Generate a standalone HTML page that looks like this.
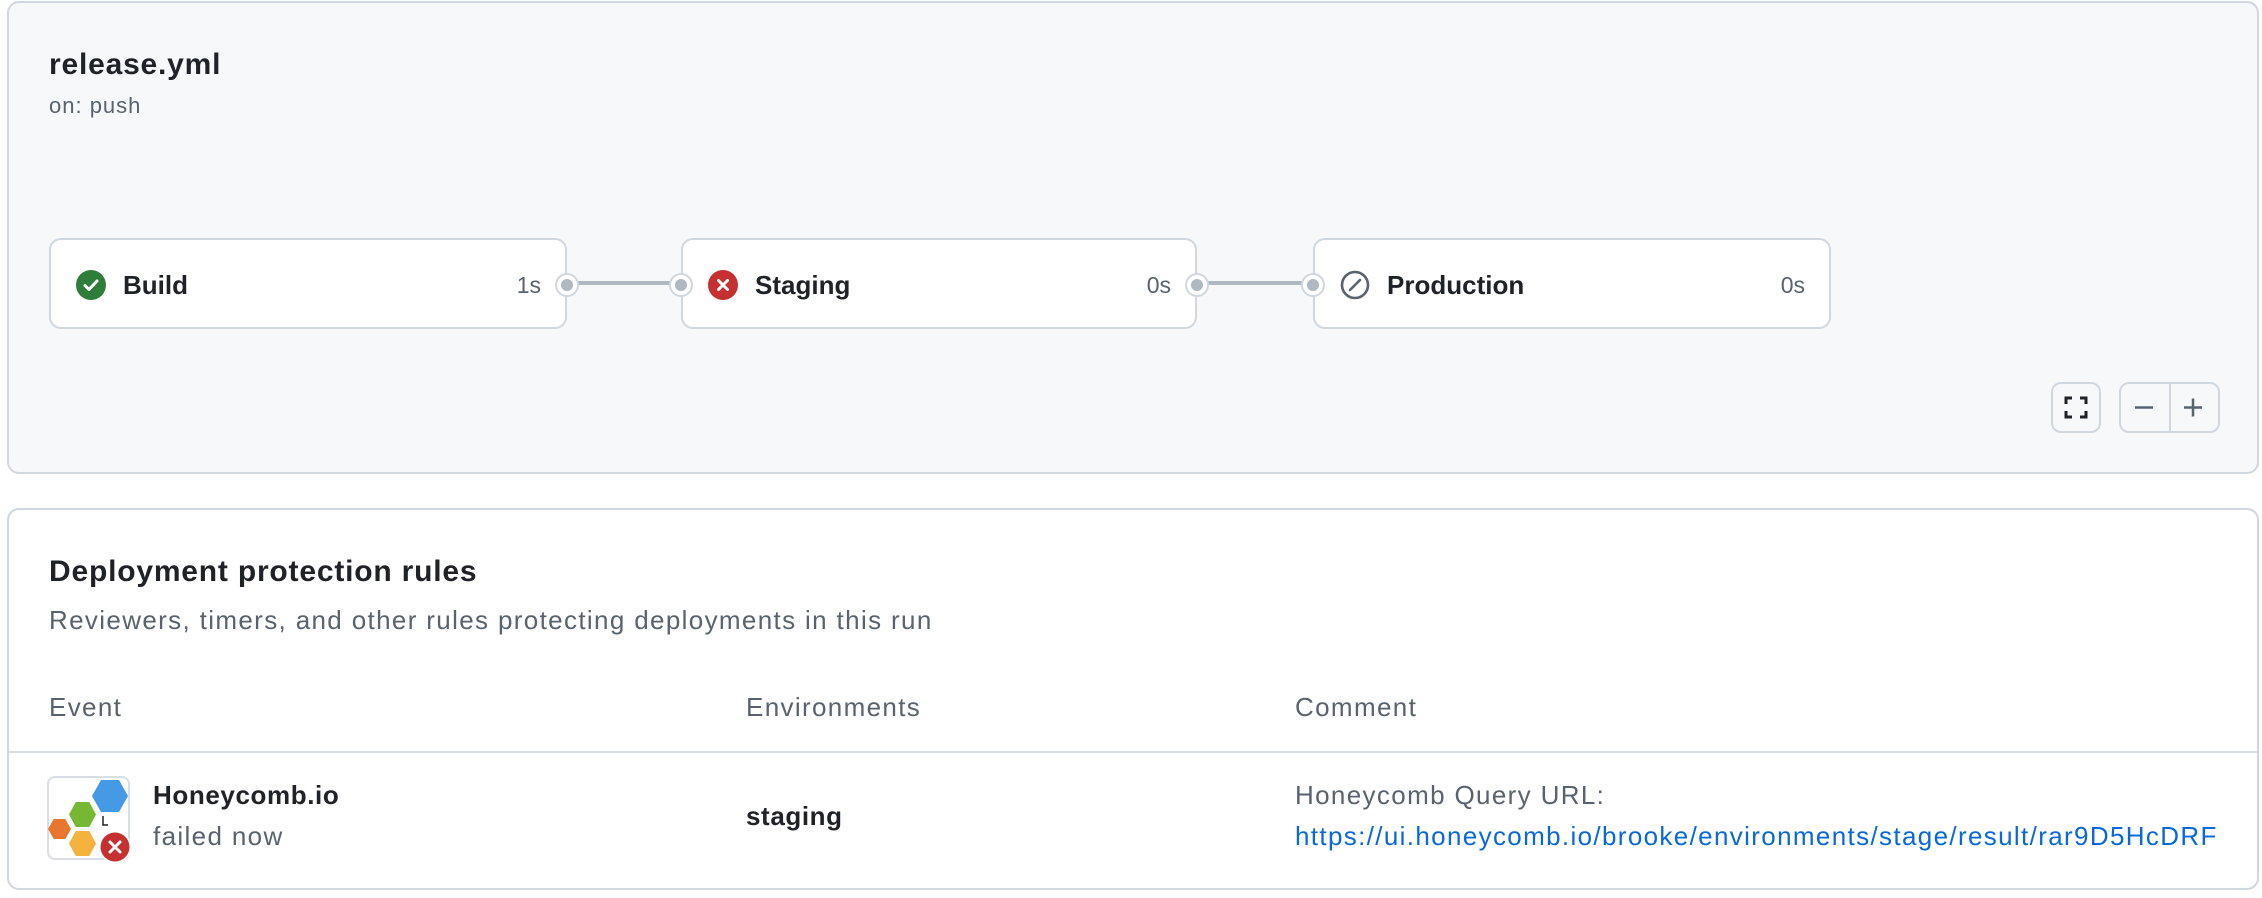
<!DOCTYPE html>
<html><head><meta charset="utf-8"><style>
*{box-sizing:border-box;margin:0;padding:0}
body{width:2262px;height:898px;background:#fff;font-family:"Liberation Sans",sans-serif;color:#1f2328;position:relative;overflow:hidden}
.a{position:absolute;white-space:nowrap}
.p1{left:7px;top:1px;width:2252px;height:473px;background:#f6f8fa;border:2px solid #d0d7de;border-radius:12px}
.p2{left:7px;top:508px;width:2252px;height:382px;background:#fff;border:2px solid #d0d7de;border-radius:12px}
.node{position:absolute;top:238px;height:91px;background:#fff;border:2px solid #d0d7de;border-radius:12px}
.lbl{position:absolute;left:72px;top:30px;font-size:26px;font-weight:600;color:#1f2328}
.dur{position:absolute;right:24px;top:32px;font-size:23px;color:#59636e}
.dot{position:absolute;width:20px;height:20px;border-radius:50%;background:#afb8c1;border:4px solid #fff;box-shadow:0 0 0 2px #d0d7de;top:35px}
.ic{position:absolute;left:25px;top:30px}
.line{position:absolute;top:281px;height:4px;background:#afb8c1}
.btn{position:absolute;background:#f6f8fa;border:2px solid #d0d7de;border-radius:10px}
.g{color:#59636e}
.t{font-size:26px;letter-spacing:1.35px}
.b{font-size:26px;font-weight:700;letter-spacing:0.6px}
</style></head><body>
<div class="a p1"></div>
<div class="a" style="left:49px;top:48px;font-size:30px;font-weight:700;letter-spacing:0.8px">release.yml</div>
<div class="a g" style="left:49px;top:93px;font-size:22px;letter-spacing:1px">on: push</div>

<div class="line" style="left:575px;width:100px"></div>
<div class="line" style="left:1205px;width:110px"></div>

<div class="node" style="left:49px;width:518px">
<svg class="ic" width="30" height="30" viewBox="0 0 30 30"><circle cx="15" cy="15" r="15" fill="#2f7d3b"/><path d="M9 15.5l4 4 8-8.5" stroke="#fff" stroke-width="3" fill="none" stroke-linecap="round" stroke-linejoin="round"/></svg>
<div class="lbl">Build</div><div class="dur">1s</div>
<div class="dot" style="right:-12px"></div>
</div>
<div class="node" style="left:681px;width:516px">
<svg class="ic" width="30" height="30" viewBox="0 0 30 30"><circle cx="15" cy="15" r="15" fill="#c53030"/><path d="M10.5 10.5l9 9M19.5 10.5l-9 9" stroke="#fff" stroke-width="3" stroke-linecap="round"/></svg>
<div class="lbl">Staging</div><div class="dur">0s</div>
<div class="dot" style="left:-12px"></div>
<div class="dot" style="right:-12px"></div>
</div>
<div class="node" style="left:1313px;width:518px">
<svg class="ic" width="30" height="30" viewBox="0 0 30 30"><circle cx="15" cy="15" r="13" fill="none" stroke="#59636e" stroke-width="2.6"/><path d="M10 20l10-10" stroke="#59636e" stroke-width="2.6" stroke-linecap="round"/></svg>
<div class="lbl">Production</div><div class="dur">0s</div>
<div class="dot" style="left:-12px"></div>
</div>

<div class="btn" style="left:2051px;top:382px;width:50px;height:51px">
<svg width="46" height="47" viewBox="0 0 46 47"><path d="M13 20v-6h6M27 14h6v6M33 27v6h-6M19 33h-6v-6" stroke="#1f2328" stroke-width="3" fill="none"/></svg>
</div>
<div class="btn" style="left:2119px;top:382px;width:101px;height:51px">
<div class="a" style="left:48px;top:0;width:2px;height:47px;background:#d0d7de"></div>
<svg class="a" style="left:0;top:0" width="97" height="47" viewBox="0 0 97 47"><path d="M14 23.5h18M63 23.5h18M72 14.5v18" stroke="#59636e" stroke-width="2.5"/></svg>
</div>

<div class="a p2"></div>
<div class="a" style="left:49px;top:555px;font-size:30px;font-weight:700;letter-spacing:0.8px">Deployment protection rules</div>
<div class="a g t" style="left:49px;top:605px">Reviewers, timers, and other rules protecting deployments in this run</div>
<div class="a g t" style="left:49px;top:692px">Event</div>
<div class="a g t" style="left:746px;top:692px">Environments</div>
<div class="a g t" style="left:1295px;top:692px">Comment</div>
<div class="a" style="left:9px;top:751px;width:2248px;height:2px;background:#d8dee4"></div>

<div class="a" style="left:47px;top:776px;width:83px;height:84px;border:2px solid #d8dee4;border-radius:8px;background:#fff"></div>
<svg class="a" style="left:47px;top:776px" width="90" height="90" viewBox="0 0 90 90">
<polygon points="45,20 54,4 72,4 81,20 72,36 54,36" fill="#4699e4"/>
<polygon points="22,38.5 28.75,26 42.25,26 49,38.5 42.25,51 28.75,51" fill="#76b733"/>
<polygon points="1,53 6.75,43 18.25,43 24,53 18.25,63 6.75,63" fill="#e87530"/>
<polygon points="22,67.5 28.75,55 42.25,55 49,67.5 42.25,80 28.75,80" fill="#f4b23e"/>
<path d="M56 40v9h5" stroke="#1f2328" stroke-width="1.5" fill="none"/>
<circle cx="68" cy="71" r="16" fill="#fff"/>
<circle cx="68" cy="71" r="14.5" fill="#c53030"/>
<path d="M63 66l10 10M73 66l-10 10" stroke="#fff" stroke-width="3" stroke-linecap="round"/>
</svg>
<div class="a b" style="left:153px;top:780px">Honeycomb.io</div>
<div class="a g t" style="left:153px;top:821px">failed now</div>
<div class="a b" style="left:746px;top:801px">staging</div>
<div class="a g t" style="left:1295px;top:780px">Honeycomb Query URL:</div>
<div class="a t" style="left:1295px;top:821px;color:#0969da">https://ui.honeycomb.io/brooke/environments/stage/result/rar9D5HcDRF</div>
</body></html>
